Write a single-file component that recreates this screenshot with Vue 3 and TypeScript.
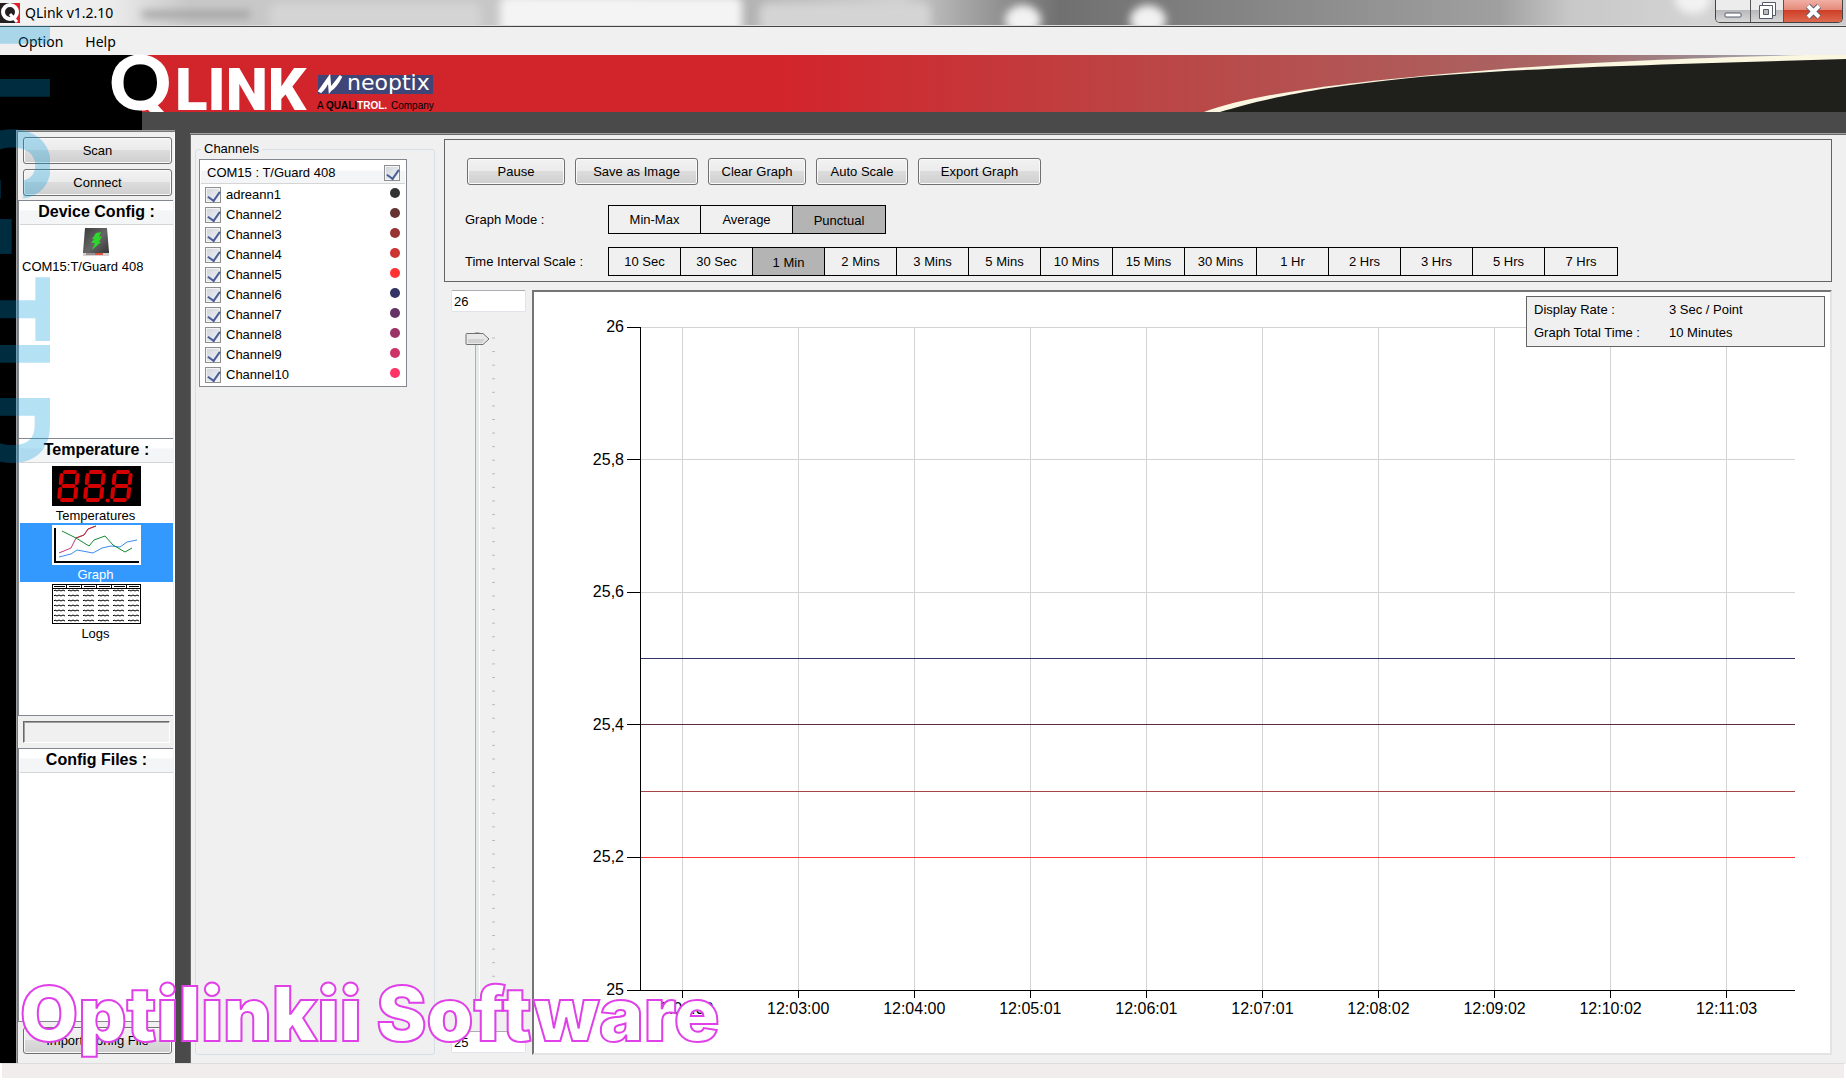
<script setup lang="ts">
import { ref } from 'vue'

interface Channel { name: string; color: string; on: boolean }

const channels = ref<Channel[]>([
  { name: 'adreann1', color: '#333333', on: true },
  { name: 'Channel2', color: '#663333', on: true },
  { name: 'Channel3', color: '#993333', on: true },
  { name: 'Channel4', color: '#cc3333', on: true },
  { name: 'Channel5', color: '#ff3333', on: true },
  { name: 'Channel6', color: '#333366', on: true },
  { name: 'Channel7', color: '#663366', on: true },
  { name: 'Channel8', color: '#993366', on: true },
  { name: 'Channel9', color: '#cc3366', on: true },
  { name: 'Channel10', color: '#ff3366', on: true },
])
const deviceOn = ref(true)

const actions = [
  { label: 'Pause', size: 'mid' },
  { label: 'Save as Image', size: 'wide' },
  { label: 'Clear Graph', size: 'mid' },
  { label: 'Auto Scale', size: 'slim' },
  { label: 'Export Graph', size: 'wide' },
]
const modes = ['Min-Max', 'Average', 'Punctual']
const mode = ref('Punctual')
const intervals = ['10 Sec', '30 Sec', '1 Min', '2 Mins', '3 Mins', '5 Mins', '10 Mins', '15 Mins', '30 Mins', '1 Hr', '2 Hrs', '3 Hrs', '5 Hrs', '7 Hrs']
const interval = ref('1 Min')
const yMax = ref('26')
const yMin = ref('25')

const yTicks = ['26', '25,8', '25,6', '25,4', '25,2', '25'].map((label, i) => ({ label, pos: i * 20 }))
const xTicks = ['12:02:00', '12:03:00', '12:04:00', '12:05:01', '12:06:01', '12:07:01', '12:08:02', '12:09:02', '12:10:02', '12:11:03']
  .map((label, i) => ({ label, pos: 3.65 + i * 10.048 }))
const series = [
  { pos: 50, color: '#333366' },
  { pos: 60, color: '#5a2a40' },
  { pos: 70, color: '#a84444' },
  { pos: 80, color: '#ff3333' },
]
const sliderTicks = Array.from({ length: 50 }, (_, i) => i * 2)

// Seven-segment digit, drawn in a 20x32 box before slanting
const segments = ['M6 1h10', 'M6 15h10', 'M6 29h10', 'M3 4v8', 'M19 4v8', 'M3 18v8', 'M19 18v8']
</script>

<template>
  <div class="window">
    <header class="titlebar">
      <svg class="app-icon" width="20" height="20" viewBox="0 0 20 20" aria-hidden="true">
        <rect width="20" height="20" fill="#231f20" />
        <path d="M13 0h7v20h-4z" fill="#e01f2b" />
        <circle cx="10" cy="9" r="7" fill="#231f20" stroke="#fff" stroke-width="4" />
        <path d="M10 11l7 8" stroke="#fff" stroke-width="3" />
      </svg>
      <span class="title">QLink v1.2.10</span>
      <div class="glass" aria-hidden="true">
        <i class="smudge"></i>
        <i class="tab t1"></i><i class="tab t2"></i><i class="tab t3"></i>
        <i class="blob b1"></i><i class="blob b2"></i><i class="blob b3"></i>
      </div>
      <div class="caption-buttons">
        <button type="button" class="cap min" aria-label="Minimize">
          <svg width="18" height="6" viewBox="0 0 18 6"><rect x="1" y="1" width="16" height="4" rx="1" fill="#fff" stroke="#555a6a" /></svg>
        </button>
        <button type="button" class="cap max" aria-label="Restore">
          <svg width="19" height="18" viewBox="0 0 19 18">
            <path d="M4.500 .5h13v13h-13z" fill="#fff" stroke="#555a6a" />
            <path d="M1.500 3.500h13v13h-13z" fill="#fff" stroke="#555a6a" />
            <path d="M5.500 7.500h5v5h-5z" fill="#bbb" stroke="#555a6a" />
          </svg>
        </button>
        <button type="button" class="cap close" aria-label="Close">
          <svg width="17" height="15" viewBox="0 0 17 15">
            <path d="M3 2l11 11M14 2L3 13" stroke="#555a6a" stroke-width="6" />
            <path d="M3 2l11 11M14 2L3 13" stroke="#fff" stroke-width="4" />
          </svg>
        </button>
      </div>
    </header>

    <nav class="menubar">
      <a href="#">Option</a>
      <a href="#">Help</a>
    </nav>

    <div class="banner">
      <svg class="brand" width="440" height="58" viewBox="0 0 440 58" role="img" aria-label="QLink by neoptix">
        <rect width="142" height="58" fill="#000" />
        <circle cx="142" cy="28" r="24" fill="#000" />
        <text class="logo-q" x="109" y="55">Q</text>
        <text class="logo-link" x="175" y="55">LINK</text>
        <rect x="318" y="20" width="115" height="19" fill="#404577" />
        <path d="M319 37l10-14 1 12 11-14M320 37c5-4 7-8 9-14M330 35c5-3 8-8 11-14" fill="none" stroke="#fff" stroke-width="3" />
        <text class="neo" x="347" y="35">neoptix</text>
        <text class="sub" x="317" y="54">A</text>
        <text class="sub strong" x="326" y="54">QUALI<tspan fill="#fff">TROL.</tspan></text>
        <text class="sub" x="391" y="54">Company</text>
      </svg>
      <svg class="swoosh" width="646" height="57" viewBox="0 0 646 57" aria-hidden="true">
        <path d="M4 57C50 40 130 29 255 18S480 3 646 -1V57z" fill="#faf6e0" />
        <path d="M20 57C60 45 110 33 210 23S480 9 646 4V57z" fill="#1f1f1c" />
      </svg>
    </div>

    <div class="workspace">
      <aside class="sidebar">
        <div class="stack">
          <button type="button" class="btn">Scan</button>
          <button type="button" class="btn">Connect</button>
        </div>

        <section class="pane devices">
          <h2>Device Config :</h2>
          <a href="#" class="device">
            <svg width="26" height="28" viewBox="0 0 26 28" aria-hidden="true">
              <defs>
                <linearGradient id="dev" x1="0" y1="0" x2="1" y2="1">
                  <stop offset="0" stop-color="#3a3a3a" /><stop offset=".5" stop-color="#666" /><stop offset="1" stop-color="#2e2e2e" />
                </linearGradient>
              </defs>
              <path d="M2 0h22l2 24v4H0v-4z" fill="url(#dev)" />
              <path d="M0 25h26v3H0z" fill="#d8d0d0" />
              <path d="M3 26h9" stroke="#555" /><path d="M12 26h8" stroke="#e05040" stroke-width="2" />
              <path d="M13 5l5-1-2 5 3-1-3 6h2l-9 8 3-7H8l3-4H9z" fill="#2fd42f" />
            </svg>
            <span>COM15:T/Guard 408</span>
          </a>
        </section>

        <section class="pane views">
          <h2>Temperature :</h2>
          <a href="#" class="view">
            <svg width="89" height="40" viewBox="0 0 89 40" aria-hidden="true">
              <rect width="89" height="40" fill="#000" />
              <g fill="none" stroke="#d40000" stroke-width="4" stroke-linecap="round">
                <g v-for="x in [7, 33, 60]" :key="x" :transform="`translate(${x} 5) skewX(-6)`">
                  <path v-for="d in segments" :key="d" :d="d" />
                </g>
                <path d="M55.500 34.500h.1" />
              </g>
            </svg>
            <span>Temperatures</span>
          </a>
          <a href="#" class="view selected">
            <svg width="89" height="40" viewBox="0 0 89 40" aria-hidden="true">
              <rect width="89" height="40" fill="#fff" />
              <path d="M3 3v34h84" fill="none" stroke="#000" stroke-width="2" />
              <path d="M7 28l12-5 5-10 8-3 4-6 8-3" fill="none" stroke="#c33a7a" />
              <path d="M24 13l8-3 4-6 8-3" fill="none" stroke="#b03030" />
              <path d="M7 32l12-3 6-4 16 3 9-5 9-2 9 1 7-5 10-2" fill="none" stroke="#3a8cf0" />
              <path d="M10 6l14 7 13 8 5-6 11-4 8 9 12 7 7-4" fill="none" stroke="#108a30" />
            </svg>
            <span>Graph</span>
          </a>
          <a href="#" class="view">
            <svg width="89" height="40" viewBox="0 0 89 40" aria-hidden="true">
              <rect x=".5" y=".5" width="88" height="39" fill="#fff" stroke="#000" />
              <path d="M0 4.500h89M14.500 0v5M29.500 0v5M44.500 0v5M59.500 0v5M74.500 0v5" stroke="#000" />
              <path d="M2 2.500h85" stroke="#000" stroke-dasharray="11 4" />
              <g v-for="y in [7, 12, 17, 22, 27, 32, 37]" :key="y" fill="none" stroke="#000">
                <path v-for="x in [2, 16, 31, 46, 61, 76]" :key="x" :d="`M${x} ${y}l1-1 2 1 2-1 2 1 2-1 2 1`" />
              </g>
            </svg>
            <span>Logs</span>
          </a>
        </section>

        <div class="progress-row"><div class="progress" role="progressbar" aria-label="Transfer"></div></div>

        <section class="pane configs">
          <h2>Config Files :</h2>
        </section>
        <div class="stack last">
          <button type="button" class="btn">Import Config File</button>
        </div>
      </aside>

      <main class="panel">
        <fieldset class="channels">
          <legend>Channels</legend>
          <div class="channel-list">
            <label class="channel-head">
              <span>COM15 : T/Guard 408</span>
              <input v-model="deviceOn" type="checkbox" />
            </label>
            <label v-for="c in channels" :key="c.name" class="channel">
              <input v-model="c.on" type="checkbox" />
              <span class="name">{{ c.name }}</span>
              <svg width="10" height="10" viewBox="0 0 10 10" aria-hidden="true"><circle cx="5" cy="5" r="5" :fill="c.color" /></svg>
            </label>
          </div>
        </fieldset>

        <div class="content">
          <section class="controls">
            <div class="actions">
              <button v-for="a in actions" :key="a.label" type="button" class="btn" :class="a.size">{{ a.label }}</button>
            </div>
            <div class="option-row">
              <span class="caption">Graph Mode :</span>
              <div class="segmented modes">
                <button v-for="m in modes" :key="m" type="button" :class="{ active: m === mode }" @click="mode = m">{{ m }}</button>
              </div>
            </div>
            <div class="option-row">
              <span class="caption">Time Interval Scale :</span>
              <div class="segmented intervals">
                <button v-for="t in intervals" :key="t" type="button" :class="{ active: t === interval }" @click="interval = t">{{ t }}</button>
              </div>
            </div>
          </section>

          <div class="graph-row">
            <div class="scale">
              <input v-model="yMax" type="text" aria-label="Maximum" />
              <div class="slider">
                <svg class="ticks" width="3" height="100%" aria-hidden="true">
                  <line v-for="t in sliderTicks" :key="t" x1="0" x2="3" :y1="t + '%'" :y2="t + '%'" stroke="#bcbcbc" />
                </svg>
                <div class="track"></div>
                <svg class="thumb" width="25" height="14" viewBox="0 0 25 14" role="slider" aria-label="Scale">
                  <path d="M2 1.500h16l6 5.500-6 5.500H2q-1 0-1-1v-9q0-1 1-1z" fill="#e8e8e8" stroke="#707070" />
                  <path d="M3 7h17l-3 4H3z" fill="#d2d2d2" />
                </svg>
              </div>
              <input v-model="yMin" type="text" aria-label="Minimum" />
            </div>

            <section class="chart">
              <svg class="plot" width="100%" height="100%">
                <line v-for="t in yTicks.slice(0, 5)" :key="t.label" x1="0" x2="100%" :y1="t.pos + '%'" :y2="t.pos + '%'" class="grid" />
                <line v-for="t in xTicks" :key="t.label" y1="0" y2="100%" :x1="t.pos + '%'" :x2="t.pos + '%'" class="grid" />
                <line v-for="s in series" :key="s.pos" x1="0" x2="100%" :y1="s.pos + '%'" :y2="s.pos + '%'" :stroke="s.color" class="serie" />
                <line x1="0" x2="0" y1="0" y2="100%" class="axis" />
                <line x1="0" x2="100%" y1="100%" y2="100%" class="axis" />
                <g v-for="t in yTicks" :key="'y' + t.label">
                  <line x1="-13" x2="0" :y1="t.pos + '%'" :y2="t.pos + '%'" class="axis" />
                  <text x="-16" :y="t.pos + '%'" dy="5" text-anchor="end">{{ t.label }}</text>
                </g>
                <svg y="100%" width="100%" height="40" overflow="visible">
                  <g v-for="t in xTicks" :key="'x' + t.label">
                    <line :x1="t.pos + '%'" :x2="t.pos + '%'" y1="0" y2="8" class="axis" />
                    <text :x="t.pos + '%'" y="24" text-anchor="middle">{{ t.label }}</text>
                  </g>
                </svg>
              </svg>
              <dl class="info">
                <dt>Display Rate :</dt><dd>3 Sec / Point</dd>
                <dt>Graph Total Time :</dt><dd>10 Minutes</dd>
              </dl>
            </section>
          </div>
        </div>
      </main>
    </div>

    <footer class="statusbar"></footer>

    <svg class="edge-mark" width="50" height="480" viewBox="0 0 50 480" aria-hidden="true">
      <g transform="translate(-26 0) rotate(90)">
        <text x="20 73 125 212 274 339 392" y="0">IIC-TID</text>
      </g>
    </svg>
    <p class="watermark">Optilinkii Software</p>
  </div>
</template>

<style>
body { margin: 0; background: #f0f0f0; }
</style>

<style scoped>
* { box-sizing: border-box; }
.window {
  position: relative;
  display: flex;
  flex-direction: column;
  min-height: 100vh;
  overflow: hidden;
  background: #f0f0f0;
  color: #000;
  font: 13px/16px "Liberation Sans", Arial, sans-serif;
}
a { color: inherit; text-decoration: none; }
button { font: inherit; color: inherit; padding: 0; }

/* Title bar */
.titlebar {
  position: relative;
  display: flex;
  align-items: center;
  height: 27px;
  border-bottom: 1px solid #444;
  background: linear-gradient(90deg, #f4f4f4 0, #ececec 110px, #c8c8c8 190px, #c8c8c8 480px, #b4b4b4 750px, #cfcfcf 900px, #a8a8a8 960px, #707070 1060px, #808080 1200px, #a0a0a0 1500px, #c8c8c8 1570px, #d4d4d4 1700px, #ccc 100%);
}
.app-icon, .title, .caption-buttons { position: relative; z-index: 1; }
.title { margin-left: 5px; font: 14px/20px "Noto Sans", "Open Sans", sans-serif; }
.glass { position: absolute; inset: 0; overflow: hidden; border-bottom: 1px solid #ddd; }
.smudge { position: absolute; left: 142px; top: 11px; width: 108px; height: 7px; background: #a0a0a0; filter: blur(4px); }
.tab, .blob { position: absolute; filter: blur(4px); }
.tab { top: 3px; height: 30px; background: #d4d4d4; border-radius: 8px; }
.t1 { left: 270px; width: 210px; }
.t2 { left: 500px; top: -4px; width: 242px; height: 40px; background: #f4f4f4; }
.t3 { left: 760px; width: 170px; }
.blob { top: 5px; width: 36px; height: 30px; border-radius: 50%; background: #f2f2f2; }
.b1 { left: 1005px; }
.b2 { left: 1130px; }
.b3 { left: 1675px; top: -16px; }
.caption-buttons {
  display: flex;
  align-self: flex-start;
  height: 23px;
  margin: 0 3px 0 auto;
  border: 1px solid #444;
  border-top: 0;
  border-radius: 0 0 5px 5px;
  overflow: hidden;
}
.cap { display: flex; align-items: center; justify-content: center; border: 0; background: linear-gradient(#ececec 45%, #b8b8bc 46%, #d8d8d8); }
.min { width: 34px; padding-top: 8px; }
.max { width: 33px; border-left: 1px solid #555; }
.close { width: 59px; border-left: 1px solid #555; background: linear-gradient(#f0b0a4 0, #e58a7a 44%, #cf3e26 46%, #dc6a50 100%); }

/* Menu */
.menubar { display: flex; gap: 22px; height: 28px; padding: 4px 18px; font: 14px/21px "Noto Sans", "Open Sans", sans-serif; }

/* Banner */
.banner {
  display: flex;
  justify-content: space-between;
  height: 57px;
  background: linear-gradient(90deg, #d2242b 0, #d2242b 780px, #bc4444 1140px, #a86664 1560px, #9c8a90 1700px, #b0b4c4 1800px);
}
.brand { overflow: visible; }
.logo-q { font: 900 77px "Lato", sans-serif; fill: #fff; }
.logo-link { font: 900 60px "Roboto", sans-serif; fill: #fff; }
.neo { font: 22px "DejaVu Sans", sans-serif; fill: #fff; }
.sub { font: 10px "Liberation Sans", sans-serif; }
.strong { font-weight: bold; }

/* Workspace */
.workspace { flex: 1; display: flex; background: linear-gradient(90deg, #000 142px, #4a4a4a 142px); }
.sidebar {
  display: flex;
  flex-direction: column;
  width: 175px;
  margin-top: 18px;
  border-left: 16px solid #000;
  background: #f0f0f0;
  box-shadow: inset 1px 1px #a0a0a0, inset 2px 2px #777, inset -1px 0 #fff;
}
.btn {
  height: 27px;
  border: 1px solid #707070;
  border-radius: 3px;
  background: linear-gradient(#f2f2f2 0, #ebebeb 48%, #dcdcdc 50%, #cfcfcf 100%);
  box-shadow: inset 0 0 0 1px #fafafa;
}
.stack { display: flex; flex-direction: column; gap: 5px; padding: 7px 3px 4px 7px; }
.stack.last { padding: 5px 3px 9px 7px; }
.pane { margin: 0 2px; background: #fff; border: 1px solid #828790; border-width: 1px 0 1px 1px; }
h2 {
  height: 24px;
  margin: 0 0 1px 1px;
  border-bottom: 1px solid #d5d5d5;
  background: linear-gradient(#fff 40%, #f4f5f7 42%, #f4f5f7);
  font-size: 16px;
  line-height: 22px;
  text-align: center;
}
.devices { height: 238px; border-bottom: 0; }
.views { height: 278px; }
.configs { flex: 1; min-height: 100px; }
.device { display: flex; flex-direction: column; gap: 3px; padding: 2px 3px; }
.device svg { align-self: center; }
.view { display: flex; flex-direction: column; align-items: center; gap: 2px; height: 59px; margin-left: 1px; padding-top: 2px; }
.view svg { flex: none; }
.view span { padding-right: 2px; }
.selected { background: #3399ff; color: #fff; }
.progress-row { padding: 5px 5px 5px 7px; }
.progress { height: 22px; border: 1px solid #fff; border-color: #696969 #fff #fff #696969; box-shadow: inset 1px 1px #a0a0a0; }

.panel {
  flex: 1;
  display: flex;
  min-width: 0;
  margin: 22px 0 0 15px;
  padding: 4px 14px 8px 4px;
  background: #f0f0f0;
  border: 1px solid #696969;
  border-width: 1px 0 0 1px;
  box-shadow: 0 -1px #a0a0a0;
}
.channels { width: 240px; min-width: 0; margin: 2px 0 0; padding: 0 3px; border: 1px solid #d5dfe5; border-radius: 3px; }
legend { padding: 0 3px; margin-left: 2px; }
.channel-list { width: 208px; margin-top: 2px; padding-bottom: 1px; border: 1px solid #828790; background: #fff; }
.channel-head {
  display: flex;
  align-items: center;
  justify-content: space-between;
  height: 24px;
  margin: 0 1px 1px;
  padding: 3px 5px 0 6px;
  border-bottom: 1px solid #d5d5d5;
  background: linear-gradient(#fff 45%, #f4f5f7 47%);
}
.channel { display: flex; align-items: center; height: 20px; padding: 0 6px 0 5px; }
.channel .name { flex: 1; margin-left: 5px; }
.channel svg { margin-bottom: 5px; }
input[type="checkbox"] {
  appearance: none;
  position: relative;
  width: 16px;
  height: 16px;
  margin: 0;
  border: 1px solid #8e8f8f;
  background: linear-gradient(135deg, #cfd3da, #f4f5f7);
  box-shadow: inset 0 0 0 1px #f4f4f4;
}
input[type="checkbox"]:checked::after {
  content: "";
  position: absolute;
  left: 4px;
  top: 1px;
  width: 6px;
  height: 10px;
  border: solid #4a5f97;
  border-width: 0 2px 2px 0;
  transform: rotate(35deg);
}

.content { flex: 1; display: flex; flex-direction: column; gap: 8px; min-width: 0; margin-left: 9px; }
.controls { display: flex; flex-direction: column; padding: 18px 22px 5px; border: 1px solid #646464; }
.actions { display: flex; gap: 10px; margin-bottom: 20px; }
.mid { width: 98px; }
.wide { width: 123px; }
.slim { width: 92px; }
.option-row { display: flex; align-items: center; }
.option-row + .option-row { margin-top: 13px; }
.caption { width: 143px; margin-left: -2px; }
.segmented { display: flex; height: 29px; border: 1px solid #000; }
.segmented button { border: 0; border-right: 1px solid #000; background: #f0f0f0; }
.segmented button:last-child { border-right: 0; }
.segmented .active { background: #b4b4b4; padding-top: 2px; }
.modes button { width: 92px; }
.intervals button { width: 72px; }

.graph-row { flex: 1; display: flex; min-height: 400px; }
.scale { display: flex; flex-direction: column; width: 75px; margin: 0 6px 2px 7px; }
.scale input {
  width: 75px;
  height: 22px;
  padding: 0 2px;
  border: 1px solid #e2e3ea;
  border-top-color: #abadb3;
  border-radius: 2px;
  background: #fff;
  font: inherit;
}
.slider { position: relative; flex: 1; margin: 20px 0; }
.track { width: 5px; height: 100%; margin-left: 24px; border: 1px solid #b0b0b0; border-right-color: #fff; background: #e7eaea; }
.ticks { position: absolute; left: 41px; top: 6px; overflow: visible; }
.thumb { position: absolute; left: 14px; top: 0; }

.chart {
  position: relative;
  flex: 1;
  min-width: 0;
  display: flex;
  padding: 35px 35px 63px 106px;
  background: #fff;
  border: 2px solid #e3e3e3;
  border-top-color: #747474;
  border-left-color: #747474;
}
.plot { flex: 1; min-width: 0; overflow: visible; font-size: 16px; }
.plot line { shape-rendering: crispEdges; }
.grid { stroke: #d3d3d3; }
.axis { stroke: #000; }
.info {
  position: absolute;
  top: 4px;
  right: 5px;
  display: grid;
  grid-template-columns: 135px 1fr;
  align-content: space-between;
  width: 299px;
  height: 51px;
  margin: 0;
  padding: 5px 7px;
  border: 1px solid #646464;
  background: #f0f0f0;
}
.info dd { margin: 0; }

.statusbar { height: 17px; border: 2px solid #fff; border-top: 1px solid #ddd; background: #f1edec; }

/* Overlays */
.edge-mark { position: absolute; left: 0; top: 0; pointer-events: none; }
.edge-mark text { font: 800 104px "Inter", sans-serif; fill: rgb(0 150 220 / 29%); }
.watermark {
  position: absolute;
  left: 20px;
  bottom: 16px;
  margin: 0;
  color: #fff;
  font: 900 75px/100px "Inter", sans-serif;
  white-space: nowrap;
  -webkit-text-stroke: 2px #e040e8;
  pointer-events: none;
}
</style>
